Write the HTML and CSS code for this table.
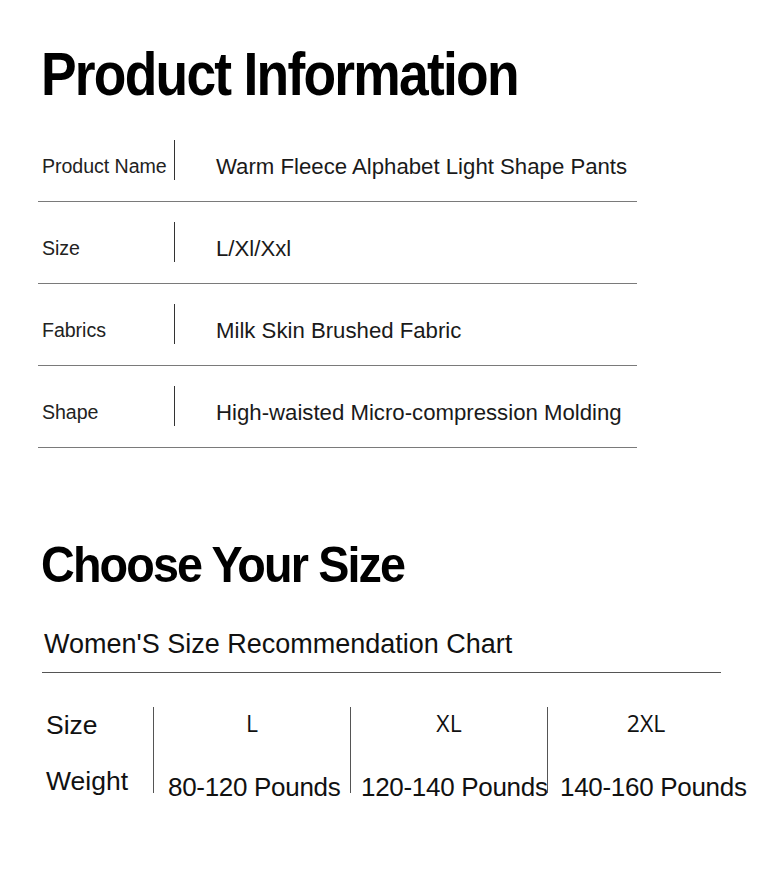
FILE: index.html
```html
<!DOCTYPE html>
<html>
<head>
<meta charset="utf-8">
<link rel="stylesheet" href="styles.css">
</head>
<body>
<div class="page">
  <section class="info">
    <h1 class="title"><span class="squeeze">Product Information</span></h1>
    <div class="table">
      <div class="row">
        <div class="label">Product Name</div>
        <div class="divider"></div>
        <div class="value">Warm Fleece Alphabet Light Shape Pants</div>
      </div>
      <div class="row">
        <div class="label">Size</div>
        <div class="divider"></div>
        <div class="value">L/Xl/Xxl</div>
      </div>
      <div class="row">
        <div class="label">Fabrics</div>
        <div class="divider"></div>
        <div class="value">Milk Skin Brushed Fabric</div>
      </div>
      <div class="row">
        <div class="label">Shape</div>
        <div class="divider"></div>
        <div class="value">High-waisted Micro-compression Molding</div>
      </div>
    </div>
  </section>
  <section class="sizes">
    <h2 class="title2"><span class="squeeze2">Choose Your Size</span></h2>
    <div class="subtitle">Women'S Size Recommendation Chart</div>
    <div class="chart">
      <div class="chart-labels">
        <div class="c-label">Size</div>
        <div class="c-label c-weight">Weight</div>
      </div>
      <div class="col">
        <div class="c-head">L</div>
        <div class="c-val">80-120 Pounds</div>
      </div>
      <div class="col">
        <div class="c-head">XL</div>
        <div class="c-val">120-140 Pounds</div>
      </div>
      <div class="col">
        <div class="c-head">2XL</div>
        <div class="c-val">140-160 Pounds</div>
      </div>
    </div>
  </section>
</div>
</body>
</html>
```

FILE: styles.css
```css
* { box-sizing: border-box; }
html, body { margin: 0; padding: 0; background: #fff; }
body {
  font-family: "Liberation Sans", Arial, sans-serif;
  color: #111;
  width: 780px;
  height: 870px;
  overflow: hidden;
}
.page { padding: 0 0 0 38px; }

.title {
  margin: 0;
  padding: 38px 0 0 3px;
  font-size: 61px;
  line-height: 72px;
  font-weight: bold;
  letter-spacing: -2px;
  color: #000;
  white-space: nowrap;
}
.squeeze {
  display: inline-block;
  transform: scaleX(0.875);
  transform-origin: left center;
}

.table { width: 599px; margin-top: 10px; }
.row {
  display: flex;
  align-items: center;
  height: 82px;
  padding: 20px 0 21px 4px;
  border-bottom: 1px solid #7a7a7a;
}
.label {
  width: 132px;
  font-size: 19.6px;
  letter-spacing: -0.05px;
  color: #222;
  padding-top: 12px;
  white-space: nowrap;
}
.divider {
  width: 1px;
  height: 40px;
  background: #333;
  flex: none;
}
.value {
  padding-left: 41px;
  padding-top: 14px;
  font-size: 22.2px;
  letter-spacing: 0;
  color: #1a1a1a;
  white-space: nowrap;
}

.sizes { padding-top: 87px; }
.title2 {
  margin: 0;
  padding-left: 3px;
  font-size: 50px;
  line-height: 60px;
  font-weight: bold;
  letter-spacing: -2px;
  color: #000;
  white-space: nowrap;
}
.squeeze2 {
  display: inline-block;
  transform: scaleX(0.935);
  transform-origin: left center;
}
.subtitle {
  margin-top: 33px;
  margin-left: 4px;
  padding-left: 2px;
  width: 679px;
  font-size: 27px;
  letter-spacing: 0;
  line-height: 32px;
  padding-bottom: 12px;
  border-bottom: 1px solid #555;
  color: #111;
}

.chart {
  display: flex;
  margin-top: 34px;
  margin-left: 8px;
}
.chart-labels { width: 107px; flex: none; padding-top: 3px; }
.c-label {
  font-size: 26.5px;
  line-height: 30px;
  letter-spacing: 0;
  color: #111;
}
.c-weight { margin-top: 26px; }
.col {
  width: 197px;
  flex: none;
  border-left: 1px solid #555;
  height: 86px;
}
.c-head {
  text-align: center;
  font-family: "Open Sans", sans-serif;
  font-size: 23px;
  font-weight: 500;
  line-height: 30px;
  padding-top: 1px;
  color: #111;
}
.c-val {
  padding-left: 14px;
  margin-top: 34px;
  font-size: 26px;
  line-height: 30px;
  letter-spacing: -0.3px;
  white-space: nowrap;
  color: #111;
}
.col:nth-child(3) .c-val { padding-left: 10px; }
.col:nth-child(4) .c-val { padding-left: 12px; }
```
